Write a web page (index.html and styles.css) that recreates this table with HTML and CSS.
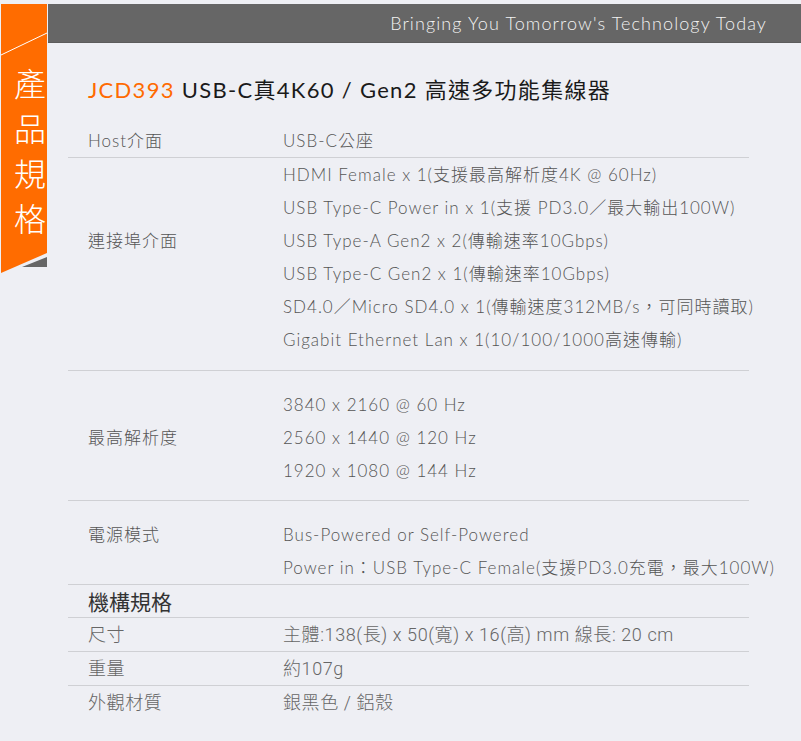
FILE: index.html
```html
<!DOCTYPE html>
<html lang="zh-Hant">
<head>
    <meta charset="UTF-8">
    <meta name="viewport" content="width=device-width, initial-scale=1.0">
    <title>JCD393 產品規格</title>
    <link rel="stylesheet" href="styles.css">
</head>
<body>
    <div class="page">
        <div class="ribbon">
            <svg class="ribbon-shape" width="48" height="274" viewBox="0 0 48 274">
                <polygon points="47,253 47,263 22,263" fill="#666666"/>
                <polygon points="1,0 47,0 47,249 1,269" fill="#ff6c00"/>
                <line x1="1" y1="51" x2="47" y2="29" stroke="#ffffff" stroke-width="1"/>
            </svg>
            <div class="ribbon-text">
                <span>產</span>
                <span>品</span>
                <span>規</span>
                <span>格</span>
            </div>
        </div>

        <header class="topbar">
            <p class="slogan">Bringing You Tomorrow's Technology Today</p>
        </header>

        <main class="spec">
            <h1 class="title"><span class="model">JCD393</span> USB-C真4K60 / Gen2 高速多功能集線器</h1>

            <div class="spec-table">
                <div class="row row-single">
                    <div class="label">Host介面</div>
                    <div class="values">
                        <p>USB-C公座</p>
                    </div>
                </div>

                <div class="row row-ports">
                    <div class="label label-line3">連接埠介面</div>
                    <div class="values">
                        <p>HDMI Female x 1(支援最高解析度4K @ 60Hz)</p>
                        <p>USB Type-C Power in x 1(支援 PD3.0／最大輸出100W)</p>
                        <p>USB Type-A Gen2 x 2(傳輸速率10Gbps)</p>
                        <p>USB Type-C Gen2 x 1(傳輸速率10Gbps)</p>
                        <p>SD4.0／Micro SD4.0 x 1(傳輸速度312MB/s，可同時讀取)</p>
                        <p>Gigabit Ethernet Lan x 1(10/100/1000高速傳輸)</p>
                    </div>
                </div>

                <div class="row row-resolution">
                    <div class="label label-line2">最高解析度</div>
                    <div class="values">
                        <p>3840 x 2160 @ 60 Hz</p>
                        <p>2560 x 1440 @ 120 Hz</p>
                        <p>1920 x 1080 @ 144 Hz</p>
                    </div>
                </div>

                <div class="row row-power">
                    <div class="label">電源模式</div>
                    <div class="values">
                        <p>Bus-Powered or Self-Powered</p>
                        <p>Power in：USB Type-C Female(支援PD3.0充電，最大100W)</p>
                    </div>
                </div>

                <div class="row row-heading">
                    <div class="heading">機構規格</div>
                </div>

                <div class="row row-single row-narrow">
                    <div class="label">尺寸</div>
                    <div class="values">
                        <p>主體:138(長) x 50(寬) x 16(高) mm 線長: 20 cm</p>
                    </div>
                </div>

                <div class="row row-single row-narrow">
                    <div class="label">重量</div>
                    <div class="values">
                        <p>約107g</p>
                    </div>
                </div>

                <div class="row row-single row-narrow row-last">
                    <div class="label">外觀材質</div>
                    <div class="values">
                        <p>銀黑色 / 鋁殼</p>
                    </div>
                </div>
            </div>
        </main>
    </div>
</body>
</html>
```

FILE: styles.css
```css
body {
    margin: 0;
    background-color: #eeeff4;
    font-family: "Lato", "Noto Sans CJK TC", sans-serif;
    font-weight: 300;
    color: #555;
}
.page {
    position: relative;
    padding-top: 4px;
    min-height: 737px;
}
.ribbon {
    position: absolute;
    left: 0;
    top: 4px;
    width: 48px;
    height: 274px;
}
.ribbon-shape {
    position: absolute;
    left: 0;
    top: 0;
}
.ribbon-text {
    position: relative;
    display: flex;
    flex-direction: column;
    padding-top: 56px;
    padding-left: 14px;
    color: #fff;
    font-family: "Noto Sans CJK TC", sans-serif;
    font-size: 32px;
    line-height: 45px;
}
.topbar {
    margin-left: 48px;
    height: 38px;
    background-color: #666666;
    border-bottom: 1px solid #5c5c5c;
    display: flex;
    align-items: center;
    justify-content: flex-end;
    padding-right: 34px;
}
.slogan {
    margin: 0;
    color: #f2f2f2;
    font-family: "Lato", "Open Sans", sans-serif;
    font-weight: 300;
    font-size: 18px;
    letter-spacing: 1.1px;
}
.spec {
    padding-left: 68px;
    width: 681px;
}
.title {
    margin: 32px 0 20px 20px;
    font-size: 22px;
    line-height: 30px;
    font-weight: normal;
    color: #1a1a1a;
    letter-spacing: 1.3px;
    white-space: nowrap;
}
.model {
    color: #ff6a00;
}
.row {
    display: grid;
    grid-template-columns: 195px 1fr;
    padding-left: 20px;
    border-bottom: 1px solid #cfd0d4;
    font-size: 17px;
    letter-spacing: 1px;
}
.values p {
    margin: 0;
    line-height: 33px;
    white-space: nowrap;
}
.label {
    line-height: 33px;
}
.label-line2 {
    margin-top: 33px;
}
.label-line3 {
    margin-top: 66px;
}
.row-single .label,
.row-single .values p {
    line-height: 32px;
}
.row-ports {
    padding-bottom: 14px;
}
.row-resolution {
    padding-top: 17px;
    padding-bottom: 13px;
}
.row-power {
    padding-top: 17px;
}
.heading {
    font-family: "Noto Sans CJK TC", sans-serif;
    font-weight: normal;
    font-size: 21px;
    line-height: 32px;
    color: #333;
    letter-spacing: 0;
}
.row-narrow {
    font-family: "Roboto", "Noto Sans CJK TC", sans-serif;
    font-weight: 300;
    font-size: 18px;
    letter-spacing: 0.6px;
    color: #666;
}
.row-narrow .label,
.row-narrow .values p {
    line-height: 33px;
}
.row-last {
    border-bottom: none;
}
```
